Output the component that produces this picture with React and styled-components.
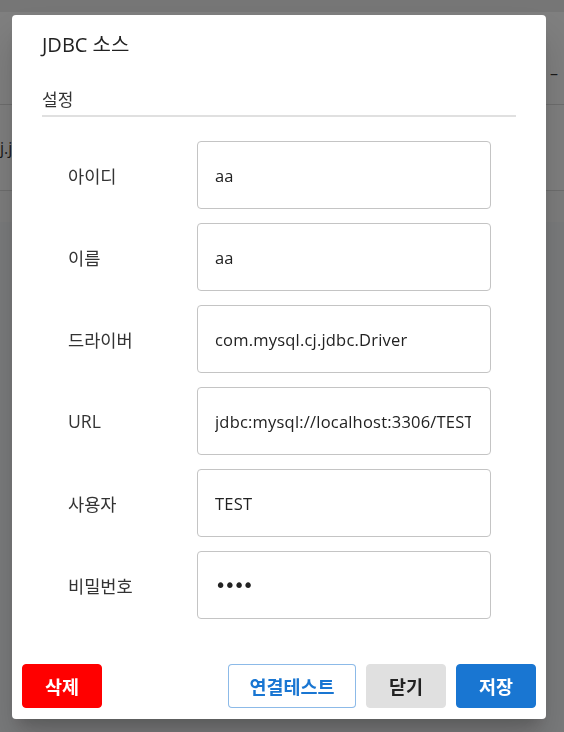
import styled, { createGlobalStyle } from "styled-components";

const GlobalStyle = createGlobalStyle`
  html, body {
    margin: 0;
    padding: 0;
  }
  body {
    font-family: "Open Sans", "Noto Sans CJK KR", sans-serif;
    color: #222;
  }
  * {
    box-sizing: border-box;
  }
`;

const Page = styled.div`
  min-height: 100vh;
  background: #f5f6f8;
`;

const TopStrip = styled.div`
  height: 12px;
  background: #ededed;
`;

const Table = styled.div`
  background: #fff;
`;

const TableRow = styled.div`
  display: flex;
  align-items: ${(props) => props.align || "center"};
  justify-content: ${(props) => props.justify || "flex-start"};
  height: ${(props) => props.height}px;
  border-bottom: 1px solid #dcdcdc;
  padding: ${(props) => props.pad || "0"};
  font-size: 16px;
  color: #333;
`;

const TableFoot = styled.div`
  height: 31px;
  background: #fafafa;
`;

const Overlay = styled.div`
  position: fixed;
  inset: 0;
  background: rgba(0, 0, 0, 0.5);
  display: flex;
  align-items: flex-start;
  justify-content: flex-start;
  padding: 15px 0 0 12px;
`;

const Dialog = styled.div`
  width: 534px;
  height: 704px;
  background: #fff;
  border-radius: 4px;
  box-shadow: 0 11px 15px -7px rgba(0, 0, 0, 0.2),
    0 24px 38px 3px rgba(0, 0, 0, 0.14);
  display: flex;
  flex-direction: column;
`;

const Body = styled.div`
  flex: 1;
  padding: 15px 30px 0;
`;

const Title = styled.h2`
  margin: 0;
  font-size: 20px;
  line-height: 30px;
  font-weight: 400;
  color: #222;
`;

const Section = styled.div`
  margin-top: 28px;
  font-size: 17px;
  line-height: 24px;
  color: #333;
  padding-bottom: 3px;
  border-bottom: 2px solid #e0e0e0;
`;

const Form = styled.div`
  display: grid;
  grid-template-columns: 129px 1fr;
  row-gap: 14px;
  margin-top: 24px;
  padding: 0 25px 0 26px;
`;

const Label = styled.label`
  display: flex;
  align-items: center;
  font-size: 17.6px;
  color: #333;
`;

const Input = styled.input`
  height: 68px;
  width: 100%;
  padding: 0 19px 0 17px;
  border: 1px solid #c4c4c4;
  border-radius: 4px;
  font-family: ${(props) =>
    props.type === "password"
      ? '"DejaVu Sans", sans-serif'
      : '"Open Sans", "Noto Sans CJK KR", sans-serif'};
  font-size: ${(props) => (props.type === "password" ? 19 : 16.5)}px;
  letter-spacing: ${(props) => (props.type === "password" ? -2 : 0.2)}px;
  color: #222;
  background: #fff;
  outline: none;
`;

const Footer = styled.div`
  display: flex;
  align-items: center;
  gap: 10px;
  padding: 10px 10px 11px;
`;

const Spacer = styled.div`
  flex: 1;
`;

const Button = styled.button`
  height: 44px;
  width: ${(props) => props.width || 80}px;
  border-radius: 4px;
  border: 1px solid ${(props) => props.border || props.bg};
  background: ${(props) => props.bg};
  color: ${(props) => props.fg};
  font-family: "Open Sans", "Noto Sans CJK KR", sans-serif;
  font-size: 18.5px;
  font-weight: 700;
  padding: 0;
  cursor: pointer;
`;

const fields = [
  { label: "아이디", value: "aa" },
  { label: "이름", value: "aa" },
  { label: "드라이버", value: "com.mysql.cj.jdbc.Driver" },
  { label: "URL", value: "jdbc:mysql://localhost:3306/TEST" },
  { label: "사용자", value: "TEST" },
  { label: "비밀번호", value: "TEST", type: "password" },
];

const App = () => {
  return (
    <>
      <GlobalStyle />
      <Page>
        <TopStrip />
        <Table>
          <TableRow height={93} justify="flex-end" align="flex-start" pad="50px 6px 0 0">
            –
          </TableRow>
          <TableRow height={86}>j.jdbc.Driver</TableRow>
          <TableFoot />
        </Table>
      </Page>
      <Overlay>
        <Dialog>
          <Body>
            <Title>JDBC 소스</Title>
            <Section>설정</Section>
            <Form>
              {fields.map((f) => [
                <Label key={f.label + "-l"}>{f.label}</Label>,
                <Input
                  key={f.label + "-i"}
                  type={f.type || "text"}
                  defaultValue={f.value}
                />,
              ])}
            </Form>
          </Body>
          <Footer>
            <Button bg="#ff0000" fg="#fff">
              삭제
            </Button>
            <Spacer />
            <Button width={128} bg="#fff" fg="#1976d2" border="rgba(25, 118, 210, 0.5)">
              연결테스트
            </Button>
            <Button bg="#e0e0e0" fg="#222">
              닫기
            </Button>
            <Button bg="#1976d2" fg="#fff">
              저장
            </Button>
          </Footer>
        </Dialog>
      </Overlay>
    </>
  );
};

export default App;
